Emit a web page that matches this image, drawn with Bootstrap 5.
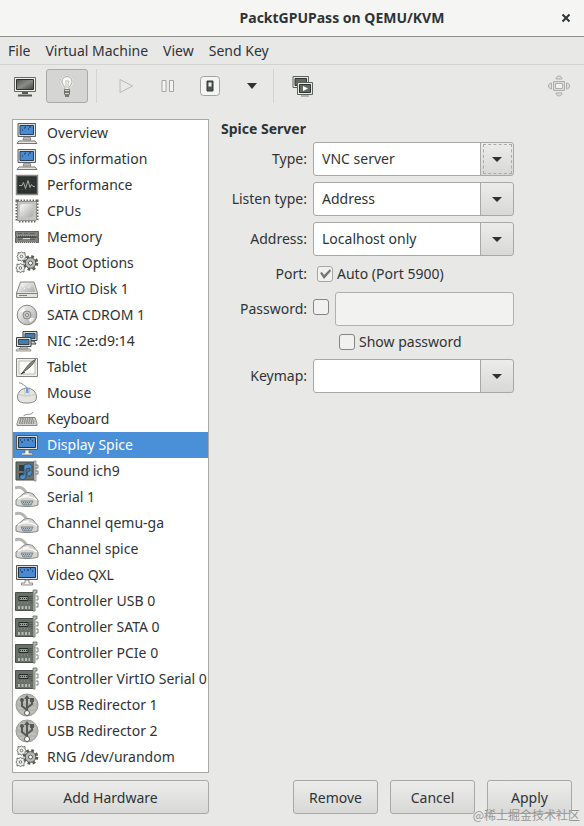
<!DOCTYPE html>
<html lang="en">
<head>
<meta charset="utf-8">
<meta name="viewport" content="width=device-width, initial-scale=1">
<title>PacktGPUPass on QEMU/KVM</title>
<link href="https://cdn.jsdelivr.net/npm/bootstrap@5.3.0/dist/css/bootstrap.min.css" rel="stylesheet">
<style>
body{font-family:"Noto Sans","Noto Sans CJK SC",sans-serif;font-size:14px;line-height:20px;color:#2e3436;background:#e8e8e7}
.titlebar{height:37px;padding-left:100px;background:#f5f5f4;border-bottom:1px solid #8e8e8c;font-size:14px}
.close-btn{right:9px;width:18px;height:18px;color:#2e3436}
.menus{height:28px;border-bottom:1px solid #d3d3d2;gap:15px}
.menus a{color:#2e3436}
.tools{height:42px}
.tool{width:42px;height:34px;border:1px solid transparent;border-radius:3px;background:none}
.tool.pressed{background:#d5d5d4;border-color:#a9a9a7}
.tool-sep{width:1px;height:34px;background:#d3d3d1}
.content-area{padding:12px}
.side{width:197px}
.hardware{background:#fff;border:1px solid #a8a8a6;border-radius:0;padding-bottom:2px}
.hardware .list-group-item{height:26px;padding:0 0 0 2px;gap:8px;border:0;color:#2e3436;background:#fff;white-space:nowrap}
.hardware .list-group-item.active{background:#4a90d9;color:#fff}
.hardware .list-group-item + .list-group-item.active{margin-top:0}
.hardware svg{width:24px;height:24px;flex:none}
.gtk-btn{height:34px;padding:0;font-size:14px;color:#2e3436;border:1px solid #a8a8a6;border-radius:3px;background:linear-gradient(#ececeb,#d8d8d7)}
.add-btn{margin-top:7px}
.action-btn{width:85px}
.form-title{font-size:14px;line-height:20px;margin-bottom:3px}
.settings{display:grid;grid-template-columns:86px minmax(0,201px);column-gap:6px;row-gap:6px;align-items:center}
.settings>label,.settings>.field-name{text-align:right}
.form-select.gtk-select{height:34px;padding:0 40px 0 8px;font-size:14px;line-height:20px;color:#2e3436;border:1px solid #a8a8a6;border-radius:3px;
background-color:#fff;
background-image:url("data:image/svg+xml,%3Csvg xmlns='http://www.w3.org/2000/svg' width='10' height='5'%3E%3Cpath d='M0 0H10L5 5z' fill='%232e3436'/%3E%3C/svg%3E"),linear-gradient(#a8a8a6,#a8a8a6),linear-gradient(#ececeb,#d8d8d7);
background-position:right 11px center,right 32px top,right top;background-size:10px 5px,1px 100%,32px 100%;background-repeat:no-repeat}
.focus-box{right:2px;top:2px;bottom:2px;width:29px;border:1px dashed #aaaaa8;pointer-events:none}
.form-check-input.gtk-check{width:16px;height:16px;margin:0;flex:none;border:1px solid #858583;border-radius:3px;background-color:#f1f1f0}
.form-check-input.gtk-check:checked{border-color:#a6a6a4;background-color:#f1f1f0;background-size:14px 14px;background-image:url("data:image/svg+xml,%3Csvg xmlns='http://www.w3.org/2000/svg' viewBox='0 0 14 14'%3E%3Cpath d='M2 6L4 5L6 8L12 2L13 4L6 12z' fill='%23757674'/%3E%3C/svg%3E")}
.port-row{height:24px;padding-left:4px}
.secret-row{gap:6px}
.show-row{height:20px;margin-bottom:1px;padding-left:26px}
.secret{height:34px;font-size:14px;border:1px solid #b0b0ae;border-radius:3px}
.secret:disabled{background:#f2f2f1}
.stamp{right:4px;bottom:2px;font-size:12px;line-height:18px;color:#979795;font-family:"Noto Sans CJK SC",sans-serif}
</style>
</head>
<body>
<svg class="position-absolute" width="0" height="0" aria-hidden="true">
<defs>
<linearGradient id="gMetal" x1="0" y1="0" x2="1" y2="1"><stop offset="0" stop-color="#fafafa"/><stop offset="1" stop-color="#a9aaa8"/></linearGradient>
<linearGradient id="gDark" x1="0" y1="0" x2="1" y2="1"><stop offset="0" stop-color="#50544f"/><stop offset=".5" stop-color="#8b8e88"/><stop offset="1" stop-color="#3f443f"/></linearGradient>
</defs>
<symbol id="i-pc" viewBox="0 0 24 24"><path d="M3 2.500H20.500V15.500H3z" fill="#ddddd6" stroke="#5b5e5b"/><path d="M5 4.500H18.500V13.500H5z" fill="#4a8ad2" stroke="#263f5d"/><path d="M7 9h1M9 7h1M10 6h1M14 6h2M13 8h1" stroke="#172c4a"/><path d="M9 16h6l1 3H8z" fill="#bdbdb5" stroke="#6c6e6a" stroke-width=".7"/><path d="M4 20h16l2 2.500H2z" fill="#e8e8e2" stroke="#747672"/></symbol>
<symbol id="i-screen" viewBox="0 0 24 24"><path d="M1.500 2.500H22.500V16.500H1.500z" fill="#dcdcd5" stroke="#555955"/><path d="M3.500 4.500H20.500V14.500H3.500z" fill="#4a8ad2" stroke="#26313e"/><path d="M5 7h1M6 9h2M9 7h1M12 7h2M15 6h1M17 8h1" stroke="#14243c"/><path d="M10 17h4v3h3.500v2h-11v-2H10z" fill="#f2f2ec" stroke="#73756f" stroke-width=".8"/></symbol>
<symbol id="i-perf" viewBox="0 0 24 24"><path d="M1.500 2.500H22.500V21.500H1.500z" fill="#2b302f" stroke="#888a86" stroke-width="1.500"/><path d="M4 6h16M4 9.500h16M4 13h16M4 16.500h16M7 4v16M11 4v16M15 4v16M19 4v16" stroke="#414745" stroke-width=".5"/><path d="M4 12.500h3l1.500-3 2 6 2.500-8 2 7 1.500-3 1.500 2h2" fill="none" stroke="#a9aba7"/></symbol>
<symbol id="i-cpu" viewBox="0 0 24 24"><path d="M2.500 2.500H21.500V21.500H2.500z" fill="none" stroke="#646762" stroke-width="4" stroke-dasharray="1.600 1.400"/><rect x="2.500" y="2.500" width="19" height="19" rx="1" fill="#c3c4c0" stroke="#8c8f89"/><rect x="5" y="5" width="13" height="13" rx="3" fill="url(#gMetal)"/></symbol>
<symbol id="i-ram" viewBox="0 0 24 24"><path d="M.5 6.500h23v5H.5zM.5 12.500h23v5H.5z" fill="#7f827d" stroke="#60635f"/><path d="M3 8.500h4M9 8.500h4M15 8.500h5M3 14.500h4M15 14.500h5" stroke="#5c605c"/><path d="M2 11h20M2 17.500h20" stroke="#bfc1bb" stroke-dasharray="1 1"/><path d="M3 12h18" stroke="#343936"/><path d="M8 13.500h7" stroke="#d5d5d0"/></symbol>
<symbol id="i-gears" viewBox="0 0 24 24"><g fill="#f0f0ed" stroke="#555853"><circle cx="15.500" cy="12" r="6.500" stroke-width="2.600" stroke-dasharray="2.700 2.400"/><circle cx="15.500" cy="12" r="5.300" fill="#b7b9b4"/><circle cx="15.500" cy="12" r="2" fill="#fff"/><g stroke-width=".8"><path d="M3 1.500l2 .5 1.500-1L8 2l2-.5V4l1 1.500L10 7v2.500L8 9l-1.500 1L5 9l-2 .5V7L2 5.500 3 4z"/><circle cx="6.500" cy="5.500" r="1.300" fill="#fff"/><path d="M2 13l2 .5 1.500-1 1.500 1L9 13v2.500l1 1.500-1 1.500V21l-2-.5-1.500 1-1.500-1L2 21v-2.500L1 17l1-1.500z"/><circle cx="5.500" cy="17" r="1.300" fill="#fff"/></g></g></symbol>
<symbol id="i-disk" viewBox="0 0 24 24"><path d="M5.500 5h13.500l3.500 11v4.500h-21V16z" fill="#e3e3df" stroke="#858782"/><path d="M6.500 6h11.500l2.500 9H3.800z" fill="url(#gMetal)"/><path d="M2 16.500h20M4 18.500h8" stroke="#7b7e79"/><path d="M7 8l3 4M13 11l3-3" stroke="#fff" stroke-dasharray="1 1"/></symbol>
<symbol id="i-disc" viewBox="0 0 24 24"><circle cx="12" cy="12" r="9.800" fill="url(#gMetal)" stroke="#858782"/><path d="M4.500 9A8 8 0 0 1 9 4.500l2 5zM19.500 15A8 8 0 0 1 15 19.500l-2-5z" fill="#fff" opacity=".75"/><circle cx="12" cy="12" r="4" fill="#c6c8c4" stroke="#898b86"/><circle cx="12" cy="12" r="1.500" fill="#fff" stroke="#777974"/></symbol>
<symbol id="i-nic" viewBox="0 0 24 24"><g stroke="#3c4348"><path d="M8 2.500h14v9H8z" fill="#dcdcd5"/><path d="M10 4.500h10v5H10z" fill="#427eaf"/><path d="M14 12h5l2 3h-5z" fill="#d0d0c9"/><path d="M1.500 8.500h14.500v9H1.500z" fill="#dcdcd5"/><path d="M3.500 10.500h10.500v5H3.500z" fill="#427eaf"/></g><path d="M6 18h6l1 2H4zM2 20h13l1 2H1z" fill="#e7e7df" stroke="#6d706b" stroke-width=".7"/></symbol>
<symbol id="i-tablet" viewBox="0 0 24 24"><path d="M1.500 3.500h21v18h-21z" fill="#eeeeea" stroke="#858782"/><path d="M4 6h16v13H4z" fill="#fafaf8" stroke="#babbb6"/><path d="M20.500 4.500C15 7 11.500 12 8 17c5-3 9.500-6 12.500-12.500z" fill="#858883" stroke="#5c5f5b"/><path d="M8 17l-2 2 4-2" stroke="#3b3f3b"/></symbol>
<symbol id="i-mouse" viewBox="0 0 24 24"><path d="M12 9C12 5 10 5 8 3.500S6 2 4 2" fill="none" stroke="#8d8f8a"/><path d="M12 7c5 0 9.500 4 9.500 9s-4 6-9.500 6-9.500-1-9.500-6 4.500-9 9.500-9z" fill="#e4e4e1" stroke="#858782"/><path d="M3 13c3 1 6 2 9 2s6-1 9-2M9 8c1 2 1 4 1 6M15 8c-1 2-1 4-1 6" fill="none" stroke="#c5c7c2"/><path d="M11 7h2.500v5H11z" fill="#729fcf"/></symbol>
<symbol id="i-keyboard" viewBox="0 0 24 24"><path d="M9 9c0-3 8 0 9-4" fill="none" stroke="#8b8d88"/><path d="M4 10.500h16l2 6v2H2v-2z" fill="#d6d7d3" stroke="#858782"/><path d="M5 12h14M4.500 14h15M4 16h16" stroke="#757872" stroke-width="1.300" stroke-dasharray="1.500 .8"/></symbol>
<symbol id="i-sound" viewBox="0 0 24 24"><path d="M1 3h18v18H1z" fill="#6b716c" stroke="#454c47"/><path d="M4 6h6v6H4zM4 14h4v5H4z" fill="#353b38"/><path d="M19 2h2v20h-2z" fill="#d7d7cf" stroke="#777a74" stroke-width=".7"/><path d="M20 6h3v3h-3M20 12h3v3h-3" fill="none" stroke="#787b75"/><path d="M9 6c5-2 7-1 8 1v8c-1 3-6 3-5-1 .5-2 3-2 3-2V9l-4 1v8c-1 4-8 3-6-1 1-2 4-1 4-1z" fill="#4f8fca" stroke="#1d3c5b" stroke-width=".7"/></symbol>
<symbol id="i-serial" viewBox="0 0 24 24"><path d="M0 3c5-2 9 0 12 6" fill="none" stroke="#b3b4b0" stroke-width="3"/><path d="M1 15L8 9c3-2 7-2 10 0l5 6v5c-5 2-17 2-22 0z" fill="#d5d6d2" stroke="#858782"/><path d="M3 14c5-3 14-3 19 1M8 11l6-1" fill="none" stroke="#fafaf8" stroke-width="1.500"/><path d="M6 16h12l-2 4H8z" fill="#aebdca" stroke="#818681"/><path d="M8 17.500h8M9 19h6" stroke="#5f7990" stroke-dasharray="1 1"/></symbol>
<symbol id="i-card" viewBox="0 0 24 24"><path d="M.5 3.500h19v18H.5z" fill="#69706a" stroke="#4a514b"/><path d="M4 7.500h9v4H4z" fill="#969c95" stroke="#252b27"/><path d="M5 9.500h7" stroke="#2e352f" stroke-dasharray="1 1"/><path d="M15 7v6M17 7v8" stroke="#343b36" stroke-dasharray="1 1"/><path d="M3 14h11" stroke="#8f958d" stroke-dasharray="1 2"/><path d="M3 18.500h12" stroke="#b8bbb2" stroke-width="3" stroke-dasharray="2 1.500"/><path d="M18 1h4v3h-2v18h-2z" fill="#babdb6" stroke="#666a65" stroke-width=".8"/><path d="M21 7h2v4h-2M21 14h2v4h-2" fill="none" stroke="#7c807a"/></symbol>
<symbol id="i-usb" viewBox="0 0 24 24"><circle cx="12" cy="12" r="11" fill="#b3b5b0" stroke="#9b9d98"/><path d="M4 5h16M3 9h18M3 15h18M5 19h14" stroke="#c9cac6"/><path d="M12 20V4M12 17L7 13V7M12 15l5-4V7" fill="none" stroke="#555953" stroke-width="2"/><path d="M12 2l3 4H9z" fill="#555953"/><circle cx="12" cy="20" r="2.500" fill="#fff" stroke="#555953"/><circle cx="7" cy="7" r="2" fill="#555953"/><path d="M15 5h4v4h-4z" fill="#555953"/></symbol>
</svg>

<div class="min-vh-100 d-flex flex-column position-relative">
<header class="titlebar d-flex align-items-center justify-content-center position-relative fw-bold">
<span>PacktGPUPass on QEMU/KVM</span>
<button class="close-btn btn p-0 border-0 position-absolute d-flex align-items-center justify-content-center" type="button" aria-label="Close"><svg width="10" height="10" viewBox="0 0 10 10"><path d="M1.500 1.500l7 7M8.500 1.500l-7 7" stroke="currentColor" stroke-width="2"/></svg></button>
</header>
<nav class="menus d-flex align-items-center px-2" aria-label="Menu">
<a class="text-decoration-none" href="#">File</a><a class="text-decoration-none" href="#">Virtual Machine</a><a class="text-decoration-none" href="#">View</a><a class="text-decoration-none" href="#">Send Key</a>
</nav>
<div class="tools d-flex align-items-center px-1" role="toolbar" aria-label="Machine controls">
<button class="tool d-flex align-items-center justify-content-center p-0" type="button" aria-label="Console"><svg width="24" height="24" viewBox="0 0 24 24"><path d="M1.500 3.500h21v14h-21z" fill="#f1f1ec" stroke="#656863"/><path d="M3.500 5.500h17v10h-17z" fill="url(#gDark)" stroke="#2d322f"/><path d="M9 18h6v2H9zM5 20.500h14v2H5z" fill="#555954"/></svg></button>
<button class="tool pressed d-flex align-items-center justify-content-center p-0 me-2" type="button" aria-label="Details" aria-pressed="true"><svg width="24" height="24" viewBox="0 0 24 24"><circle cx="12" cy="8" r="7" fill="#e4e4e2" stroke="#c8c9c5" stroke-dasharray="1 1"/><path d="M12 2.500a5 5 0 0 0-4 8l2 3v2h4v-2l2-3a5 5 0 0 0-4-8z" fill="#f7f7f4" stroke="#adafaa"/><path d="M10 7h4l-1 3v4M11 8v6" fill="none" stroke="#bcbfb9"/><path d="M9.500 15.500h5v5h-5z" fill="#d5d7d2" stroke="#747772"/><path d="M9.500 18h5M10 22h4" stroke="#555953" stroke-width="1.500"/></svg></button>
<span class="tool-sep me-2"></span>
<button class="tool d-flex align-items-center justify-content-center p-0" type="button" aria-label="Run" disabled><svg width="18" height="18" viewBox="0 0 18 18"><path d="M3 2.500L15.500 9 3 15.500z" fill="#e9e9e7" stroke="#b9bab8"/></svg></button>
<button class="tool d-flex align-items-center justify-content-center p-0" type="button" aria-label="Pause"><svg width="16" height="16" viewBox="0 0 16 16"><path d="M2 2.500h4v11H2zM9.500 2.500h4v11h-4z" fill="#f4f4f3" stroke="#a3a5a1"/></svg></button>
<button class="tool d-flex align-items-center justify-content-center p-0" type="button" aria-label="Shut down"><svg width="22" height="22" viewBox="0 0 22 22"><rect x="1.500" y="1.500" width="19" height="19" rx="3" fill="#f5f5f4" stroke="#a1a39f"/><path d="M8 6h6v10H8z" fill="#515550" stroke="#343834"/><path d="M9.500 7.500h3v4h-3z" fill="#f1f1ef"/></svg></button>
<button class="tool d-flex align-items-center justify-content-center p-0" type="button" aria-label="Power menu"><svg width="10" height="6" viewBox="0 0 10 6"><path d="M0 0h10L5 6z" fill="#2e3436"/></svg></button>
<span class="tool-sep me-2"></span>
<button class="tool d-flex align-items-center justify-content-center p-0" type="button" aria-label="Snapshots"><svg width="24" height="24" viewBox="0 0 24 24"><path d="M2 2.500h15.500v11H2z" fill="#e9e9e3" stroke="#5e625d"/><path d="M4 4.500h11.500v7H4z" fill="#626761" stroke="#303530"/><path d="M6.500 8.500h15v12h-15z" fill="#eaeae4" stroke="#5e625d"/><path d="M8.500 10.500h11v8h-11z" fill="#646963" stroke="#303530"/><path d="M12 12l5 2.500-5 2.500z" fill="#fff"/><path d="M10 22h8" stroke="#777a75"/></svg></button>
<button class="tool ms-auto d-flex align-items-center justify-content-center p-0" type="button" aria-label="Fullscreen" disabled><svg width="24" height="24" viewBox="0 0 24 24"><g fill="#dcdcda" stroke="#adafab"><path d="M6.500 7.500h11v9h-11z"/><path d="M8.500 9.500h7v5h-7z" fill="#f0f0ee"/><path d="M9 5c0-4 6-4 6 0zM9 19c0 4 6 4 6 0zM4.500 9c-4 0-4 6 0 6zM19.500 9c4 0 4 6 0 6z"/></g></svg></button>
</div>

<main class="content-area d-flex flex-grow-1">
<div class="side d-flex flex-column flex-shrink-0">
<div class="hardware list-group flex-grow-1" id="hardware"></div>
<button class="gtk-btn add-btn btn w-100" type="button">Add Hardware</button>
</div>
<form class="d-flex flex-column flex-grow-1 ps-2 ms-1">
<h1 class="form-title fw-bold">Spice Server</h1>
<div class="settings">
<label for="type">Type:</label>
<div class="position-relative"><select class="form-select gtk-select" id="type"><option>VNC server</option><option>Spice server</option></select><span class="focus-box position-absolute"></span></div>
<label for="listen">Listen type:</label>
<select class="form-select gtk-select" id="listen"><option>Address</option><option>None</option></select>
<label for="address">Address:</label>
<select class="form-select gtk-select" id="address"><option>Localhost only</option><option>All interfaces</option></select>
<span class="field-name">Port:</span>
<div class="port-row d-flex align-items-center gap-1"><input class="form-check-input gtk-check" type="checkbox" id="auto" checked><label for="auto">Auto (Port 5900)</label></div>
<label for="usePassword">Password:</label>
<div class="secret-row d-flex align-items-center"><input class="form-check-input gtk-check mb-1" type="checkbox" id="usePassword"><input class="secret form-control flex-grow-1" type="password" aria-label="Password text" disabled></div>
<span></span>
<div class="show-row d-flex align-items-center gap-1"><input class="form-check-input gtk-check" type="checkbox" id="show"><label for="show">Show password</label></div>
<label for="keymap">Keymap:</label>
<select class="form-select gtk-select" id="keymap"><option></option><option>en-us</option></select>
</div>
<div class="d-flex justify-content-end mt-auto gap-2">
<button class="gtk-btn action-btn btn me-1" type="button">Remove</button><button class="gtk-btn action-btn btn me-1" type="button">Cancel</button><button class="gtk-btn action-btn btn" type="button">Apply</button>
</div>
</form>
</main>
<div class="stamp position-absolute">@稀土掘金技术社区</div>
</div>
<script>
const devices=[["pc","Overview"],["pc","OS information"],["perf","Performance"],["cpu","CPUs"],["ram","Memory"],["gears","Boot Options"],["disk","VirtIO Disk 1"],["disc","SATA CDROM 1"],["nic","NIC :2e:d9:14"],["tablet","Tablet"],["mouse","Mouse"],["keyboard","Keyboard"],["screen","Display Spice"],["sound","Sound ich9"],["serial","Serial 1"],["serial","Channel qemu-ga"],["serial","Channel spice"],["screen","Video QXL"],["card","Controller USB 0"],["card","Controller SATA 0"],["card","Controller PCIe 0"],["card","Controller VirtIO Serial 0"],["usb","USB Redirector 1"],["usb","USB Redirector 2"],["gears","RNG /dev/urandom"]];
document.getElementById("hardware").innerHTML=devices.map(([icon,name])=>`<button type="button" class="list-group-item list-group-item-action d-flex align-items-center${name==="Display Spice"?" active":""}"><svg aria-hidden="true"><use href="#i-${icon}"/></svg><span>${name}</span></button>`).join("");
</script>
<script src="https://cdn.jsdelivr.net/npm/bootstrap@5.3.0/dist/js/bootstrap.bundle.min.js"></script>
</body>
</html>
